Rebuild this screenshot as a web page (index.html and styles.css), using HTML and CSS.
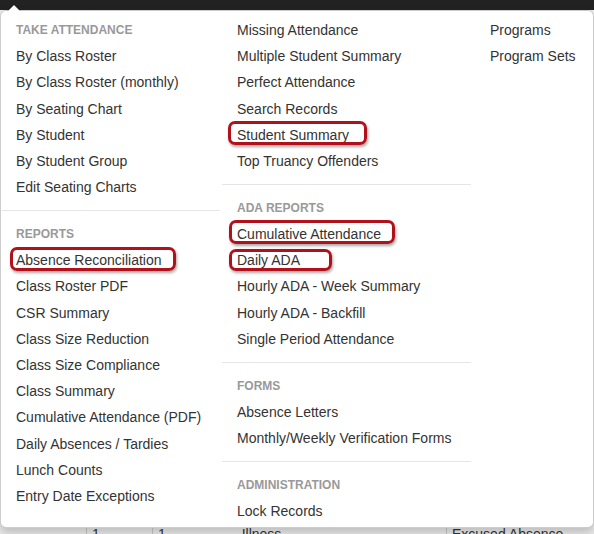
FILE: index.html
```html
<!DOCTYPE html>
<html>
<head>
<meta charset="utf-8">
<link rel="stylesheet" href="styles.css">
</head>
<body>
<div class="navbar"></div>
<div class="content">
  <table class="grid">
    <tr>
      <td class="g1"></td>
      <td class="g2">1</td>
      <td class="g3">1 <span class="ill">Illness</span></td>
      <td class="g4">Excused Absence</td>
    </tr>
  </table>
</div>

<div class="menu">
  <span class="caret"></span>
  <ul class="col col1">
    <li class="header">Take Attendance</li>
    <li>By Class Roster</li>
    <li>By Class Roster (monthly)</li>
    <li>By Seating Chart</li>
    <li>By Student</li>
    <li>By Student Group</li>
    <li>Edit Seating Charts</li>
    <li class="divider"></li>
    <li class="header">Reports</li>
    <li>Absence Reconciliation<span class="mark m-absence"></span></li>
    <li>Class Roster PDF</li>
    <li>CSR Summary</li>
    <li>Class Size Reduction</li>
    <li>Class Size Compliance</li>
    <li>Class Summary</li>
    <li>Cumulative Attendance (PDF)</li>
    <li>Daily Absences / Tardies</li>
    <li>Lunch Counts</li>
    <li>Entry Date Exceptions</li>
  </ul>
  <ul class="col col2">
    <li>Missing Attendance</li>
    <li>Multiple Student Summary</li>
    <li>Perfect Attendance</li>
    <li>Search Records</li>
    <li>Student Summary<span class="mark m-student"></span></li>
    <li>Top Truancy Offenders</li>
    <li class="divider"></li>
    <li class="header">ADA Reports</li>
    <li>Cumulative Attendance<span class="mark m-cumulative"></span></li>
    <li>Daily ADA<span class="mark m-daily"></span></li>
    <li>Hourly ADA - Week Summary</li>
    <li>Hourly ADA - Backfill</li>
    <li>Single Period Attendance</li>
    <li class="divider"></li>
    <li class="header">Forms</li>
    <li>Absence Letters</li>
    <li>Monthly/Weekly Verification Forms</li>
    <li class="divider"></li>
    <li class="header">Administration</li>
    <li>Lock Records</li>
  </ul>
  <ul class="col col3">
    <li>Programs</li>
    <li>Program Sets</li>
  </ul>
</div>
</body>
</html>
```

FILE: styles.css
```css
html, body {
  margin: 0;
  padding: 0;
}
body {
  width: 594px;
  height: 534px;
  overflow: hidden;
  background: #ececec;
  font-family: "Liberation Sans", Arial, sans-serif;
  font-size: 14px;
  color: #333;
  position: relative;
}
.navbar {
  height: 10px;
  background: #222;
}
.content {
  padding-top: 514px;
}
.grid {
  border-collapse: collapse;
  width: 594px;
}
.grid td {
  height: 20px;
  padding: 0 5px;
  vertical-align: top;
  line-height: 20px;
  border-right: 1px solid #c8c8c8;
  color: #333;
}
.grid .g1 { width: 76px; }
.grid .g2 { width: 55px; }
.grid .g3 { width: 283px; }
.grid .g4 { border-right: none; }
.ill { margin-left: 72px; }

.menu {
  position: absolute;
  top: 10px;
  left: 0;
  width: 592px;
  display: flex;
  align-items: flex-start;
  background: #fff;
  border: 1px solid rgba(0, 0, 0, 0.2);
  border-radius: 6px;
  box-shadow: 0 5px 10px rgba(0, 0, 0, 0.2);
  padding: 6px 0 2px;
}
.caret {
  position: absolute;
  top: -7px;
  left: 6px;
  width: 0;
  height: 0;
  border-left: 7px solid transparent;
  border-right: 7px solid transparent;
  border-bottom: 7px solid rgba(0, 0, 0, 0.2);
}
.caret::after {
  content: "";
  position: absolute;
  top: 1px;
  left: -6px;
  border-left: 6px solid transparent;
  border-right: 6px solid transparent;
  border-bottom: 6px solid #fff;
}
.col {
  list-style: none;
  margin: 0;
  padding: 0;
}
.col1 { width: 220px; }
.col2 { width: 251px; }
.col3 { flex: 1; }
.col li {
  position: relative;
  height: 26.2px;
  line-height: 26.2px;
  white-space: nowrap;
}
.col1 li { padding-left: 15px; }
.col2 li { padding-left: 16px; }
.col3 li { padding-left: 18px; }
.col li.header {
  font-size: 12px;
  font-weight: bold;
  color: #999;
  text-transform: uppercase;
}
.col li.divider {
  height: 1px;
  padding: 0;
  margin: 9.5px 1px 10.3px;
  background: #e5e5e5;
}
.mark {
  position: absolute;
  height: 24px;
  box-sizing: border-box;
  border: 3px solid #b0111a;
  border-radius: 7px;
  box-shadow: 1px 2px 3px rgba(0, 0, 0, 0.35);
}
.m-absence { left: 9px; top: 0; width: 166px; }
.m-student { left: 7px; top: -1px; width: 139px; }
.m-cumulative { left: 8px; top: -1px; width: 166px; }
.m-daily { left: 8px; top: 2px; width: 103px; height: 22px; }
```
